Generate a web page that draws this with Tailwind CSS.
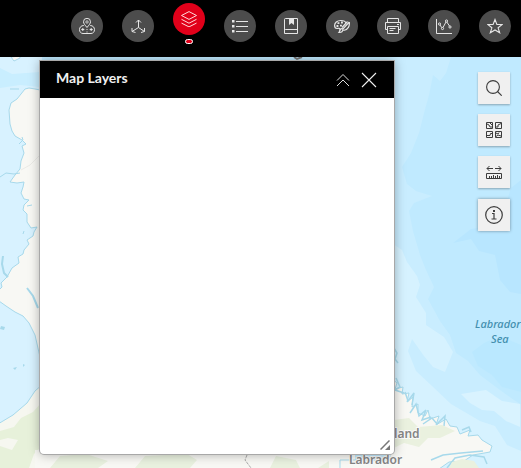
<!DOCTYPE html>
<html lang="en">
<head>
<meta charset="utf-8">
<meta name="viewport" content="width=device-width, initial-scale=1">
<title>Map Layers</title>
<script src="https://cdn.jsdelivr.net/npm/@tailwindcss/browser@4"></script>
</head>
<body class="flex h-screen flex-col overflow-hidden bg-[#c0eaff] font-['Lato','Noto_Sans',sans-serif]">
<header class="h-[57px] shrink-0 bg-black px-[10px] pt-[10px]">
  <nav aria-label="Map tools" class="flex justify-end gap-[19px]">
    <button aria-label="Places" class="grid size-8 place-items-center rounded-full bg-[#4c4c4c] text-[#e6e6e6]">
      <svg class="size-4" viewBox="0 0 16 16" fill="none" stroke="currentColor"><path d="M8 9.500C6 7 4.500 5.500 4.500 3.800a3.500 3.500 0 0 1 7 0C11.500 5.500 10 7 8 9.500z"/><circle cx="8" cy="4" r="1.200" stroke-width=".8"/><path d="M4.800 7.500C2 7.500.5 9.500.5 11.600c0 2.300 1.500 3.900 3.500 3.900h8c2 0 3.500-1.600 3.500-3.900 0-2.100-1.500-4.100-4.300-4.100"/><path d="M2.300 11.500h3M3.800 10v3M8 11v1M8 13.500v1M10.700 11.500h3M12.200 10v3"/></svg>
    </button>
    <button aria-label="Axes" class="grid size-8 place-items-center rounded-full bg-[#4c4c4c] text-[#e6e6e6]">
      <svg class="size-4" viewBox="0 0 16 16" fill="none" stroke="currentColor"><path d="M8.500 9.500V2M8.500 9.500 2 13.500M8.500 9.500l6 4M6 4.500 8.500 2 11 4.500M2 10v3.500l3.500 1M14.500 10v3.500l-3.500 1"/></svg>
    </button>
    <div class="-mt-[7px] flex flex-col items-center gap-1">
      <button aria-label="Map Layers" aria-pressed="true" class="grid size-8 place-items-center rounded-full bg-[#e1001a] text-[#ffd9dc]">
        <svg class="size-4" viewBox="0 0 16 16" fill="none" stroke="currentColor"><path d="M8 .6 15.500 4.500 8 8.400.5 4.500z"/><path d="M.5 8.300 8 12.200l7.500-3.900M.5 12.100 8 15.900l7.500-3.800"/></svg>
      </button>
      <span class="h-[5px] w-2 rounded-sm border border-white bg-[#e1001a]"></span>
    </div>
    <button aria-label="Legend" class="grid size-8 place-items-center rounded-full bg-[#4c4c4c] text-[#e6e6e6]">
      <svg class="size-4" viewBox="0 0 16 16" fill="none" stroke="currentColor"><path d="M4 3.500h12M4 8.500h12M4 13.500h12"/><path stroke="none" fill="currentColor" d="M0 2h2.500v2.500H0zM0 7h2.500v2.500H0zM0 12h2.500v2.500H0z"/></svg>
    </button>
    <button aria-label="Bookmarks" class="grid size-8 place-items-center rounded-full bg-[#4c4c4c] text-[#e6e6e6]">
      <svg class="size-4" viewBox="0 0 16 16" fill="none" stroke="currentColor"><path d="M2.500.5h12v15h-13v-14a1 1 0 0 1 1-1zM1.500 12.500a1 1 0 0 1 1-1h12"/><path stroke="none" fill="currentColor" d="M6 0h5v7L8.500 5 6 7z"/></svg>
    </button>
    <button aria-label="Draw" class="grid size-8 place-items-center rounded-full bg-[#4c4c4c] text-[#e6e6e6]">
      <svg class="size-4" viewBox="0 0 16 16" fill="none" stroke="currentColor" stroke-width="1.200"><path d="M12 5C11.500 3.300 9.500 2.500 6.800 2.500 3 2.500.6 4.700.6 7.500c0 1.800 1 3 2.400 3 1.200 0 2-.6 2.700 0 .6.600.2 1.300.3 2"/><path d="M15.300 4 9 11c-1-.7-1.700-.7-2.600.3-.9 1-.4 2-1.400 3 2.500.2 4-.8 4-3.300M15.300 4c.5 3.500-1 8-5.800 8.500M13.500 3.500 8 9.500"/><path stroke="none" fill="currentColor" d="M2.500 7h1.900v1.900H2.500zM3.500 4.200h1.900v1.900H3.500zM7 3.600h1.900v1.900H7zM6 6.700h1.900v1.900H6z"/></svg>
    </button>
    <button aria-label="Print" class="grid size-8 place-items-center rounded-full bg-[#4c4c4c] text-[#e6e6e6]">
      <svg class="size-4" viewBox="0 0 16 16" fill="none" stroke="currentColor"><path d="M2.500 4.500v-4h11v4M2.500 11.500h-2v-7h15v7h-2"/><path d="M2.500 8.500h11v7h-11zM4.500 10.500h6M4.500 12.500h4M12 6.500h2"/></svg>
    </button>
    <button aria-label="Charts" class="grid size-8 place-items-center rounded-full bg-[#4c4c4c] text-[#e6e6e6]">
      <svg class="size-4" viewBox="0 0 16 16" fill="none" stroke="currentColor"><path d="M.5 1v14.500H16M4 7l1.800 2.700M7 9.500l3-5.500M10.800 4l2.700 4"/><circle cx="3.500" cy="6" r="1.100"/><circle cx="6.500" cy="10.500" r="1.100"/><circle cx="10.500" cy="3" r="1.100"/><circle cx="14" cy="9" r="1.100"/></svg>
    </button>
    <button aria-label="Favorites" class="grid size-8 place-items-center rounded-full bg-[#4c4c4c] text-[#e6e6e6]">
      <svg class="size-4" viewBox="0 0 16 16" fill="none" stroke="currentColor" stroke-width="1.100"><path d="M8 1.500 9.900 6.500h5.300l-4.100 3.300 1.600 5L8 12l-4.700 2.800 1.600-5L.8 6.500h5.300z"/></svg>
    </button>
  </nav>
</header>

<main class="relative isolate flex min-h-0 flex-1 items-stretch pr-[11px] pl-10">
  <svg class="absolute inset-0 -z-10 size-full" viewBox="0 57 521 411" preserveAspectRatio="xMaxYMin slice" role="img" aria-label="Map of the Labrador Sea">
    <path fill="#c0eaff" d="M0 57h521v411H0z"/>
    <!-- Depth bands -->
    <path fill="#c9edff" d="M380 57h71l-5 16-6 8-7-6-4 20-5 18-5 20-8 20-9 14 5 17 9 7 16 5-18 7-5 8 4 20 7 24 6 15 8 17-6 12 12 22 10 14 6 18 12 8 12 14 20 15 14 10 20 13 13 12v58H380z"/>
    <path fill="#d6f2ff" d="M390 242l12 8 5 12 10 14 3 9-4 12 10 16 0 12 18 12 9 15-8 20-12-5-9-11-12-17-4 12 8 20 16 15 19 18 29 17 15 5 12 19 14 6v37H390z"/>
    <path fill="#d9f3ff" d="M461 394l25-4 16 11 18 3v23l-14-6-12-10-12-1-12-7z"/>
    <path fill="#b8e6ff" d="M521 180l-10 8-4 13-10 6-12 20-14 2-18 14 18-4 8 12 16 4 5 25 10 12 11 2z"/>
    <path fill="#bae8ff" d="M521 345l-21-9-16 7-12 9 6 14 14 9 10 12 19 5z"/>
    <!-- Western bay and land -->
    <path fill="#d8f2ff" d="M0 57h42v411H0z"/>
    <path fill="#c9eeff" d="M0 68l12 6 28-2v15l-20-2-20 3z"/>
    <path fill="#f8f8f4" stroke="#a7d9eb" d="M45 91l-5-1-5-1-6-1-4 1-4 5-4 5-6 4-2 7 1 14 2 7 3 5 7 4 4 4-4 2 2 7-3 8-1 8-5 6-5 7 7 1 7-1-1 5-2 6 3 6 5 1-5 5-1 5 4 4 0 8 4 6 6-1-3 5-1 4-6 4 2 4-5 6-1 4-5 3 1 6-7 5-5 9-6 6 1 4-5 5 2 9 7 5 9 6 8 4 6 7 6 12 5 22z"/>
    <path fill="none" stroke="#a7d9eb" d="M0 177l6-4 8 1 6-1M22 137l1 3-4 4M10 89h9M32 205l-5 1M24 231l-1 3"/>
    <path fill="none" stroke="#a7d9eb" stroke-width="2" d="M3 256l-1 8 2 9 4 4M27 288l6 8 5 12"/>
    <path fill="none" stroke="#ebebe7" d="M21 170l9-5 12-12"/>
    <path fill="#a7d9eb" d="M1 326l4 1-1 3-4-1zM13 368l4-1-2 3zM23 364l2 1-2 2z"/>
    <path fill="#f8f8f4" stroke="#a7d9eb" d="M11 57l3 4 6-3v-2z"/>
    <path fill="#f6f7f0" stroke="#a7d9eb" d="M-2 424l15-9 14-12 8-12 8-7v86H-2z"/>
    <path fill="#e7f1da" d="M0 431l14-4 7-9 12-6 9-10v44l-8 8-5 14H0v-22l12 4 6-10-10-2-8 2z"/>
    <!-- Southern land and coastline -->
    <path fill="#f8f8f4" d="M35 450h320v18H35z"/>
    <path fill="#e9f1df" d="M50 468l10-12 26-2 22 7-10 7zM135 468l10-12 42-2 10 6-7 8zM270 468l6-12 20 4 4 8zM318 468l11-7v7z"/>
    <path fill="none" stroke="#aaa" stroke-dasharray="3 1" d="M247 455l-2 5 6 8"/>
    <path fill="#f8f8f4" stroke="#a7d9eb" d="M390 377l7 6-2 6 8-2-1 7 7-1-2 9 6-5-1 10 6-3 0 9 7 3 3-6 2 9 9-3-3 9 10-6 4 7 7 1 3 7 10-4-2 6 10-1 4 5 10 6-2 6-17 3-9 6-15 1-10 7-15 1-10 8H340v-18h50z"/>
    <path fill="none" stroke="#a7d9eb" stroke-width="1.500" d="M394 348l3 5-2 6 3 4M396 378l4 9-5 3 9 3M405 392l3 9 6-8-2 12M410 413l6-9 3 12 7-6-4 10 9-3M423 424l9-6 5 6 8-8-1 10M462 430l7-3 2 5M431 460l12-5 18-2 22-2M447 468l8-10 15-3 14 2 3 7"/>
    <path fill="#eaf1df" d="M394 420l15-2 9 9 24-2 13 6-15 7-12 0-9 9-15-4-10 5zM452 462l10-3 12 2 5 7h-30z"/>
    <path fill="none" stroke="#777" stroke-width="2" d="M294 57l3 2 5-2"/>
    <g class="font-['Noto_Sans',sans-serif] italic" fill="#438fae" font-size="11" font-weight="500">
      <text x="475" y="328">Labrador</text><text x="491" y="343">Sea</text>
    </g>
    <g class="font-['Noto_Sans',sans-serif]" fill="#858585" font-size="12" font-weight="600" stroke="#fafafa" stroke-width="2" paint-order="stroke">
      <text x="394" y="438">land</text><text x="349" y="464">Labrador</text>
    </g>
  </svg>

  <section aria-labelledby="panel-title" class="relative mt-1 mr-[84px] mb-[14px] flex min-w-0 flex-1 flex-col overflow-hidden rounded-b-sm bg-white shadow-[0_0_0_1px_#a8a8a8,0_0_12px_rgba(0,0,0,0.35)]">
    <div class="flex h-[37px] shrink-0 items-center bg-black px-4 text-white">
      <h1 id="panel-title" class="flex-1 pb-[3px] text-sm font-bold text-[#f0f0f0]">Map Layers</h1>
      <div class="flex gap-[10px] pr-px">
        <button aria-label="Collapse"><svg class="size-4" viewBox="0 0 16 16" fill="none" stroke="#ddd"><path d="M2 8.500 8 2.500l6 6M2 14l6-6 6 6"/></svg></button>
        <button aria-label="Close"><svg class="size-4" viewBox="0 0 16 16" fill="none" stroke="#eee" stroke-width="1.100"><path d="m1 1 14 14M15 1 1 15"/></svg></button>
      </div>
    </div>
    <div class="flex min-h-0 flex-1 items-end justify-end p-1">
      <svg class="size-[10px]" viewBox="0 0 10 10" aria-hidden="true"><path d="M.5 9.500l9-9" stroke="#777" stroke-width="1.500"/><path d="M5 10l5-5v5z" fill="#777"/></svg>
    </div>
  </section>

  <aside aria-label="Map widgets" class="mt-[15px] flex w-8 shrink-0 flex-col gap-[10px] text-[#3c3c3c]">
    <button aria-label="Search" class="grid size-8 place-items-center bg-[#f0f0f0] shadow-[0_1px_2px_rgba(0,0,0,0.3)]">
      <svg class="size-4" viewBox="0 0 16 16" fill="none" stroke="currentColor" stroke-width="1.100"><circle cx="7" cy="7" r="6.400"/><path d="m11.500 11.500 4.200 4.200"/></svg>
    </button>
    <button aria-label="Basemaps" class="grid size-8 place-items-center bg-[#f0f0f0] shadow-[0_1px_2px_rgba(0,0,0,0.3)]">
      <svg class="size-4" viewBox="0 0 16 16" fill="none" stroke="currentColor"><path d="M.5.5h6v6h-6zM9.500.5h6v6h-6zM.5 9.500h6v6h-6zM9.500 9.500h6v6h-6z"/><path d="M1 2l2 1 1 2h2M4 1l2 2M10 5h2V3l3-1.500M1 13.500h3l.5-2H6M10 11l2 1 1-1.500M10 14.500l2-1.500 3 1"/></svg>
    </button>
    <button aria-label="Measure" class="grid size-8 place-items-center bg-[#f0f0f0] shadow-[0_1px_2px_rgba(0,0,0,0.3)]">
      <svg class="size-4" viewBox="0 0 16 16" fill="none" stroke="currentColor"><path d="M1 4.500h6M3.500 2 1 4.500 3.500 7M9 4.500h6M12.500 2 15 4.500 12.500 7"/><path d="M.5 9.500h15v5H.5z"/><path d="M3.500 12v2M5.500 12v2M7.500 11v3M9.500 12v2M11.500 11v3M13.500 12v2"/></svg>
    </button>
    <button aria-label="Information" class="mt-px grid size-8 place-items-center bg-[#f0f0f0] shadow-[0_0_3px_rgba(0,0,0,0.4)]">
      <svg class="size-[18px]" viewBox="0 0 18 18" fill="none" stroke="currentColor" stroke-width="1.200"><circle cx="9" cy="9" r="8.300"/><path d="M7 7.500h2v5.500M6.500 13h5"/><path fill="currentColor" stroke="none" d="M8 4h2v2H8z"/></svg>
    </button>
  </aside>
</main>
</body>
</html>
